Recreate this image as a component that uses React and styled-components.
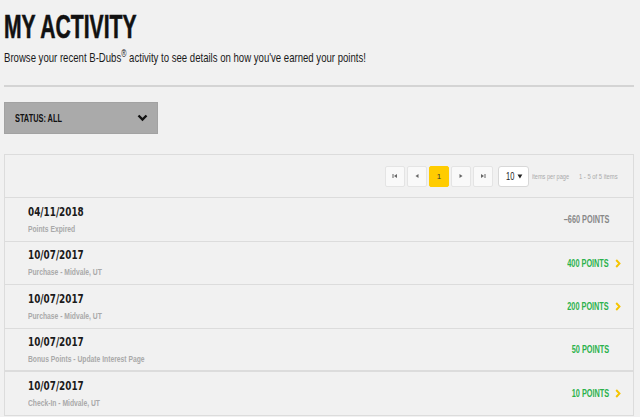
import React from "react";
import styled, { createGlobalStyle } from "styled-components";

const Global = createGlobalStyle`
  html, body { margin: 0; padding: 0; background: #f1f1f1; }
  body { font-family: "Liberation Sans", Arial, sans-serif; color: #111; }
`;

/* condensed look: the installed fonts are all normal width, so squeeze horizontally */
const Squeeze = styled.span`
  display: inline-block;
  white-space: nowrap;
  transform: scaleX(${(p) => p.k || 0.7});
  transform-origin: ${(p) => p.origin || "left"} center;
`;

const Page = styled.div`
  padding: 8px 6px 0 4px;
`;

const Title = styled.h1`
  margin: 0;
  font-weight: bold;
  font-size: 33.5px;
  line-height: 37px;
  color: #111;
  -webkit-text-stroke: 0.6px #111;
`;

const Intro = styled.p`
  margin: 4px 0 0;
  font-size: 13.5px;
  line-height: 17px;
  color: #1a1a1a;
  sup { font-size: 10px; line-height: 0; }
`;

const Rule = styled.hr`
  margin: 19px 0 0;
  border: none;
  height: 2px;
  background: #d4d4d4;
`;

const Dropdown = styled.button`
  margin-top: 15px;
  width: 154px;
  height: 32px;
  background: #aaaaaa;
  border: 1px solid #a2a2a2;
  display: flex;
  align-items: center;
  justify-content: space-between;
  padding: 0 9px 0 10px;
  font-family: inherit;
  font-weight: bold;
  font-size: 11px;
  color: #111;
  cursor: pointer;
`;

const Panel = styled.div`
  margin-top: 20px;
  border: 1px solid #dcdcdc;
  border-bottom: none;
`;

const Toolbar = styled.div`
  height: 42px;
  display: flex;
  align-items: center;
  justify-content: flex-end;
  padding-right: 15px;
  border-bottom: 1px solid #dcdcdc;
`;

const Pager = styled.div`
  display: flex;
  gap: 2px;
`;

const PageBtn = styled.div`
  width: 20px;
  height: 21px;
  box-sizing: border-box;
  display: flex;
  align-items: center;
  justify-content: center;
  background: ${(p) => (p.active ? "#ffcc00" : "#f9f9f9")};
  border: 1px solid ${(p) => (p.active ? "#ffcc00" : "#e4e4e4")};
  border-radius: 2px;
  font-size: 8px;
  color: #333;
`;

const SizeSelect = styled.div`
  margin-left: 5px;
  width: 31px;
  height: 21px;
  border: 1px solid #d8d8d8;
  border-radius: 3px;
  background: #fff;
  display: flex;
  align-items: center;
  justify-content: space-between;
  padding: 0 5px 0 7px;
  box-sizing: border-box;
  font-size: 10px;
  color: #222;
`;

const Meta = styled.div`
  width: ${(p) => p.w}px;
  margin-left: ${(p) => p.gap}px;
  font-size: 8px;
  color: #aaa;
  overflow: visible;
`;

const Row = styled.div`
  height: 43.5px;
  border-bottom: ${(p) => (p.thick ? 2 : 1)}px solid #dcdcdc;
  display: flex;
  align-items: center;
  justify-content: space-between;
  padding: 1px 12px 0 23px;
  box-sizing: border-box;
`;

const Info = styled.div`
  display: flex;
  flex-direction: column;
  gap: 4px;
`;

const DateText = styled.div`
  font-family: "DejaVu Sans", sans-serif;
  font-weight: bold;
  font-size: 11.5px;
  line-height: 13px;
  color: #1a1a1a;
`;

const Desc = styled.div`
  font-weight: bold;
  font-size: 9.5px;
  line-height: 11px;
  color: #a9a9a9;
`;

const Points = styled.div`
  display: flex;
  align-items: center;
  font-weight: bold;
  font-size: 10px;
  color: ${(p) => (p.neg ? "#888888" : "#2bb24c")};
  padding-right: ${(p) => (p.arrow ? 0 : 12)}px;
`;

const Arrow = styled.svg`
  margin-left: 6px;
  width: 6px;
  height: 9px;
`;

const Tri = ({ dir }) => (
  <svg width="6" height="6" viewBox="0 0 6 6">
    {dir === "first" && (<><rect x="0.5" y="1" width="1" height="4" fill="#666" /><path d="M5 1 L2 3 L5 5 Z" fill="#666" /></>)}
    {dir === "prev" && <path d="M4.5 1 L1.5 3 L4.5 5 Z" fill="#666" />}
    {dir === "next" && <path d="M1.5 1 L4.5 3 L1.5 5 Z" fill="#666" />}
    {dir === "last" && (<><path d="M1 1 L4 3 L1 5 Z" fill="#666" /><rect x="4.5" y="1" width="1" height="4" fill="#666" /></>)}
  </svg>
);

const rows = [
  { date: "04/11/2018", desc: "Points Expired", pts: "–660 POINTS", neg: true, arrow: false },
  { date: "10/07/2017", desc: "Purchase - Midvale, UT", pts: "400 POINTS", arrow: true },
  { date: "10/07/2017", desc: "Purchase - Midvale, UT", pts: "200 POINTS", arrow: true },
  { date: "10/07/2017", desc: "Bonus Points - Update Interest Page", pts: "50 POINTS", arrow: false },
  { date: "10/07/2017", desc: "Check-In - Midvale, UT", pts: "10 POINTS", arrow: true },
];

export default function App() {
  return (
    <Page>
      <Global />
      <Title><Squeeze k={0.63}>MY ACTIVITY</Squeeze></Title>
      <Intro>
        <Squeeze k={0.71}>
          Browse your recent B-Dubs<sup>®</sup> activity to see details on how you've earned your points!
        </Squeeze>
      </Intro>
      <Rule />
      <Dropdown>
        <Squeeze k={0.67}>STATUS: ALL</Squeeze>
        <svg width="11" height="8" viewBox="0 0 11 8">
          <path d="M1.5 1.5 L5.5 5.5 L9.5 1.5" stroke="#111" strokeWidth="2.4" fill="none" />
        </svg>
      </Dropdown>
      <Panel>
        <Toolbar>
          <Pager>
            <PageBtn><Tri dir="first" /></PageBtn>
            <PageBtn><Tri dir="prev" /></PageBtn>
            <PageBtn active>1</PageBtn>
            <PageBtn><Tri dir="next" /></PageBtn>
            <PageBtn><Tri dir="last" /></PageBtn>
          </Pager>
          <SizeSelect>
            <Squeeze k={0.75}>10</Squeeze>
            <svg width="6" height="5" viewBox="0 0 6 5"><path d="M0.5 0.5 L5.5 0.5 L3 4.5 Z" fill="#222" /></svg>
          </SizeSelect>
          <Meta w={38} gap={3}><Squeeze k={0.7}>items per page</Squeeze></Meta>
          <Meta w={39} gap={9}><Squeeze k={0.73}>1 - 5 of 5 items</Squeeze></Meta>
        </Toolbar>
        {rows.map((r, i) => (
          <Row key={i} thick={i === 3}>
            <Info>
              <DateText><Squeeze k={0.77}>{r.date}</Squeeze></DateText>
              <Desc><Squeeze k={0.71}>{r.desc}</Squeeze></Desc>
            </Info>
            <Points neg={r.neg} arrow={r.arrow}>
              <Squeeze k={0.73} origin="right">{r.pts}</Squeeze>
              {r.arrow && (
                <Arrow viewBox="0 0 6 9">
                  <path d="M1.2 1 L4.5 4.5 L1.2 8" stroke="#f5c400" strokeWidth="1.9" fill="none" />
                </Arrow>
              )}
            </Points>
          </Row>
        ))}
      </Panel>
    </Page>
  );
}
